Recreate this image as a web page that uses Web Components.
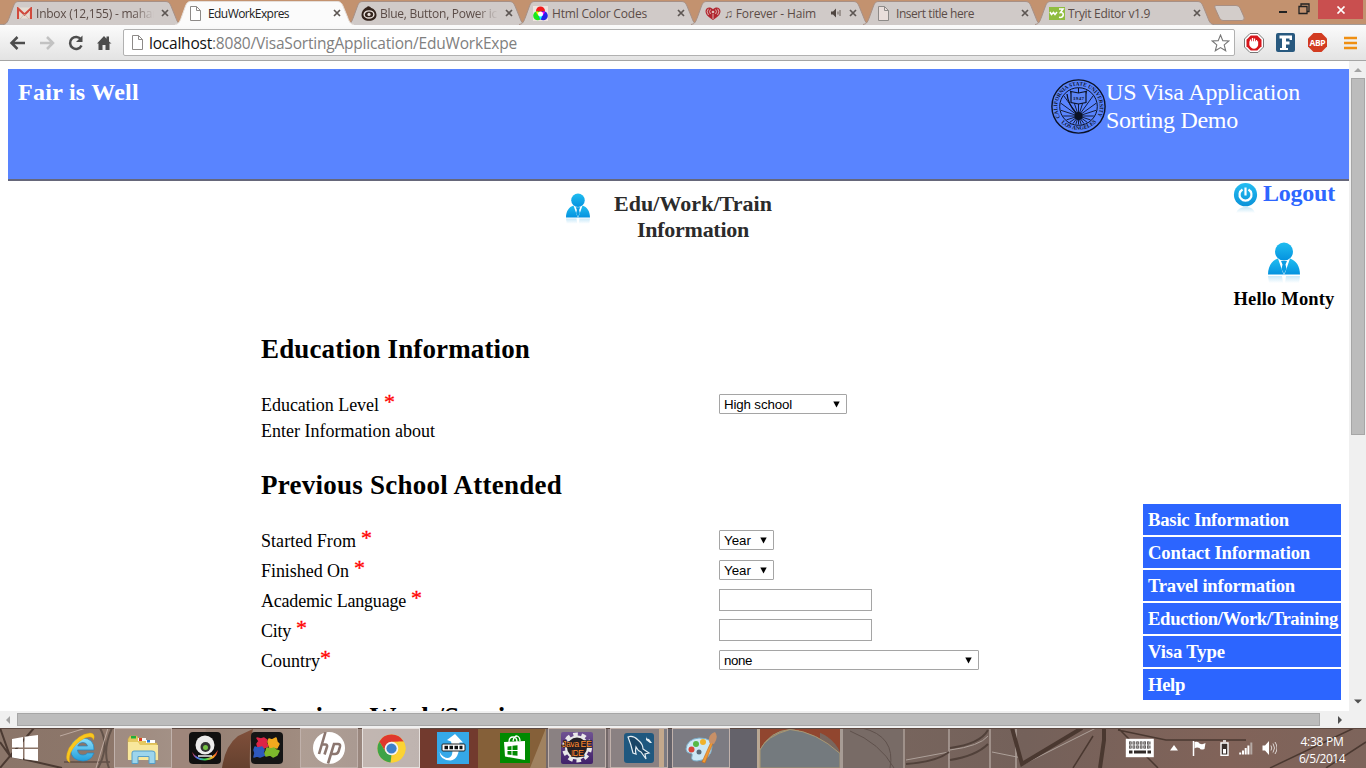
<!DOCTYPE html>
<html lang="en">
<head>
<meta charset="utf-8">
<title>EduWorkExpres</title>
<style>
html,body{margin:0;height:100%;overflow:hidden}
body{font-family:"Liberation Serif","Times New Roman",serif}
</style>
</head>
<body>
<desktop-screen></desktop-screen>
<script>
const define = (name, css, html) => customElements.define(name, class extends HTMLElement {
  constructor() {
    super();
    const t = document.createElement('template');
    t.innerHTML = `<style>*{box-sizing:border-box}${css}</style>${typeof html === 'function' ? html(this) : html}`;
    this.attachShadow({mode: 'open'}).append(t.content.cloneNode(true));
  }
});

const pageIcon = `<svg width="13" height="15" viewBox="0 0 13 15"><path d="M1.5.5h6l4 4v10h-10z" fill="var(--paper,#fff)" stroke="#8d8a88"/><path d="M7.5.5v4h4" fill="none" stroke="#8d8a88"/></svg>`;
const favicons = {
  mail: `<svg width="15" height="12" viewBox="0 0 15 12"><rect x=".5" y=".5" width="14" height="11" fill="#e6ddd3"/><path d="M1 12V1.5l6.500 6 6.500-6V12" fill="none" stroke="#d14a3d" stroke-width="2.200"/><path d="M3 12l4.500-5 4.500 5" fill="none" stroke="#c9b5a7" stroke-width=".8"/></svg>`,
  page: pageIcon,
  eye: `<svg width="16" height="15" viewBox="0 0 17 16"><path d="M4.500 2Q8 .5 7 0q3 .5 4 2c3.500 1 5.500 4.500 5.500 7.500 0 4-3.500 6.300-8 6.300S.5 13.500.5 9.500C.5 6 2.500 3.500 4.500 2z" fill="#33231c"/><ellipse cx="8.500" cy="9" rx="5.200" ry="3.800" fill="none" stroke="#e8dfda" stroke-width="1.500"/><circle cx="8.500" cy="9" r="1.700" fill="#e8dfda"/></svg>`,
  rgb: `<svg width="15" height="15" viewBox="0 0 15 15"><rect width="15" height="15" fill="#eee3df"/><circle cx="7.500" cy="5" r="4.500" fill="#f21b1b"/><circle cx="4.700" cy="9.700" r="4.500" fill="#19e81d"/><circle cx="10.300" cy="9.700" r="4.500" fill="#2424e8"/><path d="M3.200 5.500a4.500 4.500 0 0 1 4.300 3.700L7.500 9.500A4.500 4.500 0 0 1 3.200 5.500z" fill="#ff0"/><path d="M11.800 5.500a4.500 4.500 0 0 0-4.300 4 4.500 4.500 0 0 0 4.300-4z" fill="#f0f"/><path d="M7.500 7a4.500 4.500 0 0 1 0 6.500A4.500 4.500 0 0 1 7.500 7z" fill="#0ff"/><circle cx="7.500" cy="8" r="2.500" fill="#fff"/></svg>`,
  heart: `<svg width="16" height="13" viewBox="0 0 16 13"><path d="M8 13C4 10.500.5 7.700.5 4.200.5 0 5.500-.8 8 2.200 10.500-.8 15.500 0 15.500 4.200 15.500 7.700 12 10.500 8 13z" fill="#b22630"/><path d="M5.500 2.500q-2 2 0 4.500M3.300 1.800q-2.500 3 .2 6.200M10.500 2.500q2 2 0 4.500M12.700 1.800q2.500 3-.2 6.200M8 7v5" fill="none" stroke="#e0bfba" stroke-width=".9"/><circle cx="8" cy="5" r="1.300" fill="#e0bfba"/></svg>`,
  w3: `<svg width="16" height="13" viewBox="0 0 16 13"><rect width="16" height="13" fill="#8fbd3f"/><path d="M1 5l1.500 2.500L4.500 5.500 6 7.500l2-2.500" fill="none" stroke="#fff" stroke-width="1.500"/><path d="M10 2h4l-2.500 3.500q3-.3 2.700 2.500-.5 3-4.200 2.300" fill="none" stroke="#fff" stroke-width="1.600"/></svg>`
};

define('browser-tab', `
:host{display:block;position:relative;flex:none;width:172px;height:25px;color:#5b4c47;font:12px/17px "Open Sans","Noto Sans",sans-serif;--paper:#e9dedb}
:host([active]){color:#222;z-index:2;--paper:#fff}
.shape{position:absolute;left:0;top:0}
.row{position:relative;display:grid;grid-template-columns:19px 1fr auto 16px;align-items:center;height:25px;padding:1px 2px 0 13px;margin-left:1px}
.t{white-space:nowrap;overflow:hidden}
:host([fade]) .t{-webkit-mask:linear-gradient(90deg,#000 82%,transparent 100%);max-width:118px}
.ic{display:flex;align-items:center;height:17px}
.x{display:flex;justify-content:center}`,
el => { const a = el.hasAttribute('active'); return `
<svg class="shape" width="184" height="26"><path d="M0 25C4 24 5 21 6.500 17L10.500 6C12 2.500 13 1.500 16 1.500H162C165 1.500 166.500 2.500 168 6L172.500 17C174 21 175 24 179 25z" fill="${a ? '#fbfbfb' : '#d0cac8'}"/><path d="M0 24.500C4 24 5 21 6.500 17L10.500 6C12 2.500 13 1.500 16 1.500H162C165 1.500 166.500 2.500 168 6L172.500 17C174 21 175 24 179 24.500" fill="none" stroke="${a ? '#e5ded9' : '#a79086'}"/></svg>
<div class="row"><span class="ic">${favicons[el.getAttribute('icon')]}</span><span class="t"><slot></slot></span><span class="ic">${el.hasAttribute('audio') ? '<svg width="14" height="10"><path d="M0 3.500h2L5 .5v9L2 6.500H0z" fill="#4f4540"/><path d="M7 3.500v3M9 2v6" stroke="#6b605b"/></svg>' : ''}</span><span class="x"><svg width="8" height="8"><path d="M1 1l6 6M7 1L1 7" stroke="#5d5653" stroke-width="1.700"/></svg></span></div>`; });

define('tab-strip', `
:host{display:flex;height:25px;background:#c3926f;padding-left:3px;position:relative;border-bottom:1px solid #a59a95}
.new{margin:4px 0 0 6px}
.win{margin-left:auto;display:flex;height:19px;align-items:center;padding-right:3px}
.win svg{display:block}
.close{width:45px;height:19px;background:#c94f4f;display:grid;place-items:center;margin-left:8px}`, `
<browser-tab icon="mail" fade><fit-text w="121">Inbox (12,155) - mahar</fit-text></browser-tab>
<browser-tab icon="page" active><fit-text w="81">EduWorkExpres</fit-text></browser-tab>
<browser-tab icon="eye" fade><fit-text w="117">Blue, Button, Power ic</fit-text></browser-tab>
<browser-tab icon="rgb"><fit-text w="95">Html Color Codes</fit-text></browser-tab>
<browser-tab icon="heart" audio><fit-text w="92">♫ Forever - Haim</fit-text></browser-tab>
<browser-tab icon="page"><fit-text w="78">Insert title here</fit-text></browser-tab>
<browser-tab icon="w3"><fit-text w="82">Tryit Editor v1.9</fit-text></browser-tab>
<svg class="new" width="34" height="18"><path d="M3 1.500H23Q26 1.500 27 4L31 13Q32 16.500 29 16.500H10Q7.500 16.500 6.500 14L2 4Q1 1.500 3 1.500z" fill="#d3cdca" stroke="#a88f83"/></svg>
<div class="win"><svg width="10" height="19"><path d="M0 12h8" stroke="#222" stroke-width="2"/></svg>
<svg width="12" height="19" style="margin-left:9px"><path d="M1 6.500h8v7H1zM3 6V4h8v7.500H9.500" fill="none" stroke="#222" stroke-width="1.300"/></svg>
<div class="close"><svg width="10" height="8"><path d="M1.500.5l7 7M8.500.5l-7 7" stroke="#fff" stroke-width="1.700"/></svg></div></div>`);

define('tool-bar', `
:host{display:flex;height:36px;align-items:center;background:linear-gradient(#fbfbfb,#e3e3e3);border-bottom:1px solid #a5a5a5;padding:0 8px 0 9px}
svg{display:block;flex:none}
.omni{display:flex;align-items:center;width:1112px;height:27px;background:#fff;border:1px solid #b1b1b1;border-radius:2px;padding:0 4px 0 7px;font:15.500px/24px "Open Sans","Noto Sans",sans-serif;color:#808080;margin-right:9px;--paper:#fff}
.omni b{font-weight:400;color:#111}.star{margin-left:auto}.u{margin-left:5px;white-space:nowrap}`, `
<svg width="18" height="16"><path d="M8.500 2L2.500 8l6 6M3 8h13" fill="none" stroke="#4d4d4d" stroke-width="2.500"/></svg>
<svg width="18" height="16" style="margin-left:11px"><path d="M9 2l6 6-6 6M15 8H2" fill="none" stroke="#c2c2c2" stroke-width="2.500"/></svg>
<svg width="18" height="16" style="margin-left:11px"><path d="M14 4.500A6 6 0 1 0 14.500 10.500" fill="none" stroke="#4d4d4d" stroke-width="2.500"/><path d="M15.500 .5v6.500H9z" fill="#4d4d4d"/></svg>
<svg width="16" height="16" style="margin-left:11px"><path d="M1 8.500L8 1l2.500 2.700V1.500h2.500v5L15.500 8.500H13.500V15h-4v-5h-3v5h-4V8.500z" fill="#4d4d4d"/></svg>
<div class="omni" style="margin-left:11px">${pageIcon}<span class="u"><fit-text w="63"><b>localhost</b></fit-text><fit-text w="305">:8080/VisaSortingApplication/EduWorkExpe</fit-text></span>
<svg class="star" width="19" height="18"><path d="M9.500 1l2.300 5.600 6 .4-4.600 3.900 1.500 5.900-5.200-3.200-5.200 3.200 1.500-5.900L1.200 7l6-.4z" fill="#fff" stroke="#777" stroke-width="1.100"/></svg></div>
<svg width="20" height="20"><path d="M6 .5h8L19.500 6v8L14 19.500H6L.5 14V6z" fill="#fff" stroke="#777"/><path d="M6.700 2.500h6.600l4.200 4.200v6.600l-4.200 4.200H6.700l-4.200-4.200V6.700z" fill="#d7151b"/><path d="M6.500 10V6.500m2 3.500V5m2 5V5.500m2 4.500V7M6 9h7.500v3q-1 3-3.500 3T6 12z" stroke="#fff" stroke-width="1.300" fill="#fff"/></svg>
<svg width="19" height="19" style="margin-left:12px"><rect width="19" height="19" rx="2" fill="#28597f"/><path d="M3.500 2.500h12.500v4.500h-2.500v-1.500h-3.500v3h3.500v3h-3.500v3.500h2v2H4v-2h2v-9.500h-2.500z" fill="#fff"/></svg>
<svg width="19" height="19" style="margin-left:13px"><path d="M5.500 0h8L19 5.500v8L13.500 19h-8L0 13.500v-8z" fill="#d23b20"/><text x="1.500" y="12.500" textLength="16" font-family="Open Sans,sans-serif" font-size="8.500" font-weight="700" fill="#fff">ABP</text></svg>
<svg width="14" height="14" style="margin-left:17px"><path d="M0 2h13M0 7h13M0 12h13" stroke="#ef8f12" stroke-width="2.600"/></svg>`);

define('user-glyph', `:host{display:block;flex:none}svg{display:block}`, el => { const w = +el.getAttribute('size'), i = 'g' + w; return `
<svg width="${w}" height="${w * 1.32}" viewBox="0 0 32 42"><defs><linearGradient id="${i}" x2="0" y2="1"><stop stop-color="#20bdf0"/><stop offset="1" stop-color="#0492df"/></linearGradient><linearGradient id="r${i}" x2="0" y2="1"><stop stop-color="#c9e9f9"/><stop offset="1" stop-color="#fff"/></linearGradient></defs>
<circle cx="16" cy="9.500" r="9" fill="url(#${i})"/><path d="M0 32.500C0 24 4 18.500 10 16.500L15 31l1 1.500 1-1.500 5-14.500C28 18.500 32 24 32 32.500z" fill="url(#${i})"/><path d="M13 19h6l-1.500 3.500 1 4.500-2.500 5-2.500-5 1-4.500z" fill="#0b9ce3"/><path d="M0 34h14l1 7H1zM18 34h14l-1 7H17z" fill="url(#r${i})"/></svg>`; });

define('power-glyph', `:host{display:block;flex:none}svg{display:block}`, `
<svg width="25" height="31"><defs><linearGradient id="p" x2="0" y2="1"><stop stop-color="#25bdf2"/><stop offset="1" stop-color="#0a92d8"/></linearGradient><linearGradient id="q" x2="0" y2="1"><stop stop-color="#c4e7f7"/><stop offset="1" stop-color="#fff"/></linearGradient></defs><circle cx="12.500" cy="11.700" r="11.600" fill="url(#p)"/><path d="M9.500 6.500a6 6 0 1 0 6 0" fill="none" stroke="#fff" stroke-width="2.200"/><path d="M12.500 4.500v8" stroke="#fff" stroke-width="2.200"/><path d="M3 30Q5 24.500 12.500 24t9.500 6z" fill="url(#q)"/></svg>`);

define('university-seal', `:host{display:block;flex:none}svg{display:block}`, () => {
  let rays = '';
  for (let k = 0; k < 20; k++) {
    const a = k * Math.PI / 10, c = Math.cos(a), s = Math.sin(a), d = 9.5;
    const r = -d * s + Math.sqrt(18 * 18 - d * d * c * c);
    rays += `M27.500 37L${(27.5 + r * c).toFixed(1)} ${(37 + r * s).toFixed(1)}`;
  }
  return `<svg width="55" height="55" viewBox="0 0 55 55"><g fill="none" stroke="#0b1226"><circle cx="27.500" cy="27.500" r="26.600" stroke-width="1.400"/><circle cx="27.500" cy="27.500" r="18.800" stroke-width="1"/><path d="${rays}" stroke-width=".9"/></g><circle cx="27.500" cy="37" r="4" fill="#0b1226"/>
<path d="M20 12.500l7.500 1.500 7.500-1.500v11l-7.500 1.500-7.500-1.500z" fill="#5c84f5" stroke="#0b1226" stroke-width="1.200"/><path d="M27.500 9v4" stroke="#0b1226"/><path d="M16 15q1 10 9 19" stroke="#0b1226" stroke-width="1.300" fill="none"/>
<path id="a" d="M9.200 38.500A21.200 21.200 0 1 1 45.800 38.500" fill="none"/><path id="b" d="M9.500 43A24.800 24.800 0 0 0 45.500 43" fill="none"/>
<g font-family="Liberation Serif,serif" font-size="5.600" font-weight="700" fill="#0b1226"><text textLength="87" lengthAdjust="spacingAndGlyphs"><textPath href="#a">CALIFORNIA STATE UNIVERSITY</textPath></text><text><textPath href="#b" startOffset="1">LOS ANGELES</textPath></text><text x="22" y="20.500" font-size="5" textLength="11">1947</text></g></svg>`; });

define('page-header', `
:host{display:flex;height:112px;margin:8px 0 0 8px;background:#5984ff;border-bottom:2px solid #66677a;color:#fff;padding:9px 49px 0 10px}
.brand{font:bold 24px/28px "Liberation Serif",serif}
.app{margin-left:auto;display:flex;font:24px/28px "Liberation Serif",serif}
.app fit-text{display:table}university-seal{margin-top:1px}`, `
<div class="brand"><fit-text w="121">Fair is Well</fit-text></div>
<div class="app"><university-seal></university-seal><div><fit-text w="194">US Visa Application</fit-text><fit-text w="132">Sorting Demo</fit-text></div></div>`);

define('menu-link', `:host{display:flex;align-items:center;height:31px;background:#2c65ff;color:#fff;font:bold 18.700px/31px "Liberation Serif",serif;padding-left:5px}`, `<slot></slot>`);

define('side-panel', `
:host{display:flex;flex-direction:column;height:100%;color:#000}
.logout{display:flex;align-items:flex-start;justify-content:flex-end;margin-right:14px;color:#2d66ff;font:bold 24px/26px "Liberation Serif",serif;padding-top:2px;gap:5px}
.logout fit-text{margin-top:-3px}
.hello{align-self:flex-end;width:102px;margin:28px 14px 0 0;display:flex;flex-direction:column;align-items:center;font:bold 18.500px/20px "Liberation Serif",serif;gap:5px}
nav{margin:auto 8px 11px 0;display:grid;gap:2px}`, `
<div class="logout"><power-glyph></power-glyph><fit-text w="72">Logout</fit-text></div>
<div class="hello"><user-glyph size="32"></user-glyph><fit-text w="101">Hello Monty</fit-text></div>
<nav><menu-link><fit-text w="141">Basic Information</fit-text></menu-link><menu-link><fit-text w="162">Contact Information</fit-text></menu-link><menu-link><fit-text w="147">Travel information</fit-text></menu-link><menu-link><fit-text w="190">Eduction/Work/Training</fit-text></menu-link><menu-link><fit-text w="77">Visa Type</fit-text></menu-link><menu-link><fit-text w="37">Help</fit-text></menu-link></nav>`);

define('form-row', `
:host{display:grid;grid-template-columns:458px auto;align-items:center;justify-content:start;height:30px;font:18px/26px "Liberation Serif",serif;color:#000}
:host([plain]){height:26px}
.l{display:flex;align-items:baseline;height:26px;margin-top:2px}
:host([plain]) .l{margin-top:-3px}
i{font-style:normal;color:#f00;font-size:22px;line-height:20px;margin-left:5px;transform:translateY(-2px);-webkit-text-stroke:.3px #f00}
:host([tight]) i{margin-left:0}`, el => `
<div class="l"><fit-text w="${el.getAttribute('w')}">${el.getAttribute('label')}</fit-text>${el.hasAttribute('plain') ? '' : '<i>*</i>'}</div><slot></slot>`);

define('drop-down', `
:host{display:flex;align-items:center;justify-content:space-between;height:20px;border:1px solid #a5a5a5;border-radius:1px;background:#fff;font:13.300px/18px "Liberation Sans",Arial,sans-serif;padding:2px 6px 0 4px;color:#000;box-sizing:border-box}
svg{display:block;margin-top:-2px}`, `<slot></slot><svg width="7" height="7"><path d="M.3 .5h6.400L3.500 6.500z"/></svg>`);
define('text-field', `:host{display:block;width:153px;height:22px;border:1px solid #a5a5a5;background:#fff;box-sizing:border-box}`, ``);
define('section-title', `:host{display:block;height:30px;font:bold 27px/30px "Liberation Serif",serif;color:#000;white-space:nowrap}`, `<slot></slot>`);

define('form-page', `
:host{display:grid;grid-template-columns:882px 1fr;height:530px;padding-left:261px;overflow:hidden}
.c{height:530px;overflow:hidden}
.head{display:flex;padding:12px 0 0 305px;gap:24px;height:153px;font:bold 22px/26px "Liberation Serif",serif;color:#2b2b2b}
.head div{display:flex;flex-direction:column;align-items:center;margin-top:-2px;width:158px}
.g1{height:25px}.g2{height:25px}.g3{height:27px}`, `
<div class="c">
<div class="head"><user-glyph size="24"></user-glyph><div><fit-text w="158">Edu/Work/Train</fit-text><fit-text w="112">Information</fit-text></div></div>
<section-title><fit-text w="269">Education Information</fit-text></section-title><div class="g1"></div>
<form-row label="Education Level" w="118"><drop-down style="width:128px"><fit-text w="68">High school</fit-text></drop-down></form-row>
<form-row label="Enter Information about" w="174" plain></form-row><div class="g2"></div>
<section-title><fit-text w="301">Previous School Attended</fit-text></section-title><div class="g1"></div>
<form-row label="Started From" w="95"><drop-down style="width:55px"><fit-text w="27">Year</fit-text></drop-down></form-row>
<form-row label="Finished On" w="88"><drop-down style="width:55px"><fit-text w="27">Year</fit-text></drop-down></form-row>
<form-row label="Academic Language" w="145"><text-field></text-field></form-row>
<form-row label="City" w="30"><text-field></text-field></form-row>
<form-row label="Country" w="59" tight><drop-down style="width:260px"><fit-text w="28">none</fit-text></drop-down></form-row><div class="g3"></div>
<section-title><fit-text w="269">Previous Work/Service</fit-text></section-title>
</div>
<side-panel></side-panel>`);

define('v-scroll', `:host{display:flex;flex-direction:column;align-items:center;justify-content:space-between;background:#f0f0f0;padding:7px 0 7px}
.b{width:14px;height:357px;background:#bcbcbc;border:1px solid #a6a6a6;margin:5px 0 auto}svg{display:block}`, `
<svg width="8" height="5"><path d="M4 0l4 4H0z" fill="#a3a3a3"/></svg><div class="b"></div><svg width="8" height="5"><path d="M4 4.500L8 .5H0z" fill="#505050"/></svg>`);
define('h-scroll', `:host{display:flex;align-items:center;background:#f0f0f0;height:17px;padding:0 24px 0 6px}
.b{width:1303px;height:13px;background:#bcbcbc;border:1px solid #a6a6a6;margin:0 auto 0 6px}svg{display:block}`, `
<svg width="5" height="8"><path d="M0 4l4-4v8z" fill="#a3a3a3"/></svg><div class="b"></div><svg width="5" height="8"><path d="M5 4L1 0v8z" fill="#505050"/></svg>`);

const apps = {
  ie: `<svg width="32" height="32" viewBox="0 0 32 32"><defs><linearGradient id="e" x2="0" y2="1"><stop stop-color="#8ee0fb"/><stop offset="1" stop-color="#229fdc"/></linearGradient></defs><path d="M29 18H12.500q.5 5 5.500 5 3 0 4.500-2h6.500Q26 29 18 29 6 28.500 5.500 17.500 6 6.500 17.500 6 29.500 6.500 29 18zM12.700 14h9.800q-.7-3.500-4.700-3.500T12.700 14z" fill="url(#e)" stroke="#2385c0" stroke-width=".7"/><path d="M5 30.500Q-1.500 28 4 16 13 2 25 1q6 .5 3.500 7Q27.500 3 20 6 10 11 5.500 21q-2 6-.5 9.500z" fill="#fac71d" stroke="#d9a015" stroke-width=".4"/></svg>`,
  files: `<svg width="34" height="32" viewBox="0 0 34 32"><path d="M2 27V7l2-3h7l1 2h5l1 3h5l1 2h7l1 17z" fill="#e5c85f" stroke="#c9a94a" stroke-width=".6"/><path d="M2 28V10h10l2 3h18v15z" fill="#f8e79c"/><path d="M5 4h5v2.500H5z" fill="#1fae3a"/><path d="M12 6h8v3h-8z" fill="#f8f8f8"/><path d="M13 6h3v3h-3z" fill="#dc3d20"/><path d="M20 8h9v3h-9z" fill="#fff"/><path d="M21 8h3v2.500h-3z" fill="#2779d0"/><path d="M6 31.500V21q0-2 2-2h18q3 0 3 2v10.500h-6v-7H12v7z" fill="#9dd5ec" stroke="#559ec8"/></svg>`,
  cam: `<svg width="32" height="32" viewBox="0 0 32 32"><defs><linearGradient id="c"><stop stop-color="#d33"/><stop offset=".2" stop-color="#57f"/><stop offset=".5" stop-color="#3d5"/><stop offset=".8" stop-color="#fa2"/><stop offset="1" stop-color="#e33"/></linearGradient></defs><rect width="32" height="32" rx="4" fill="#101010"/><path d="M3 20q5 7 13 6.500T29 18q-2 10.500-13 10.500T3 20z" fill="url(#c)"/><circle cx="16" cy="13" r="9.500" fill="#ececec"/><circle cx="16.500" cy="15" r="5" fill="#333"/><circle cx="16.500" cy="15.500" r="2.500" fill="#75c344"/><path d="M9 24h14" stroke="#ececec" stroke-width="1.500"/></svg>`,
  puzzle: `<svg width="32" height="32" viewBox="0 0 32 32"><rect width="32" height="32" rx="4" fill="#151515"/><g stroke-linejoin="round" stroke-width="1.500"><path d="M6 6l4 1 3-1 3 2-1 3 2 3-4 2-2-2-4 1-1-3 2-3z" fill="#df2446" stroke="#df2446"/><path d="M18 7l3 1 4-2 1 4 2 2-2 4-4-1-3 1-1-3-1-3z" fill="#f2a91e" stroke="#f2a91e"/><path d="M4 15l3 1 4-1 2 3-1 3 2 2-5 2-3-1-3 1 1-4-1-3z" fill="#2e59bd" stroke="#2e59bd"/><path d="M16 16l4 1 3-1 2 2 3 1-2 4-4 2-3-2-4 1-1-3 1-2z" fill="#7eb82c" stroke="#7eb82c"/></g></svg>`,
  hp: `<svg width="32" height="32" viewBox="0 0 32 32"><circle cx="16" cy="16" r="16" fill="#fff"/><path d="M12.500 0L6 22M9 12.500h3.500q2 0 1.500 2.500l-2.500 7.500" fill="none" stroke="#8c7770" stroke-width="2.600"/><path d="M15 31.500L21 12h4q2.500 0 2 2.500l-1.500 5q-1 2.500-3.500 2.500h-3" fill="none" stroke="#8c7770" stroke-width="2.600"/></svg>`,
  chrome: `<svg width="29" height="29" viewBox="0 0 30 30"><circle cx="15" cy="15" r="14.500" fill="#f8cf35"/><path d="M15 15L9 18.500 2.400 7.800A14.500 14.500 0 0 1 27.600 7.800L15 8z" fill="#e0382d"/><path d="M2.400 7.800L9 18.500 15 21.500 14 29.500A14.500 14.500 0 0 1 2.400 7.800z" fill="#3ea348"/><path d="M14 29.500l7.500-11 .5-10.500h5.600A14.500 14.500 0 0 1 14 29.500z" fill="#fbd334"/><circle cx="15" cy="15" r="7" fill="#f4f4f4"/><circle cx="15" cy="15" r="5.300" fill="#3d80ca"/></svg>`,
  share: `<svg width="32" height="32" viewBox="0 0 32 32"><rect width="32" height="32" fill="#35a8e8"/><path d="M2.500 20q1 8.500 11 8.500 9-1 9-18h3.500L18 2l-8 6 4 1.500Q18 25 11 26q-5 0-8.500-6z" fill="#fff"/><rect x="5" y="12" width="23" height="7" rx="1" fill="#fff" stroke="#222"/><path d="M7.500 15.500h18" stroke="#111" stroke-width="3.500" stroke-dasharray="3.500 1.500"/></svg>`,
  store: `<svg width="30" height="30" viewBox="0 0 30 30"><rect width="30" height="30" fill="#008a00"/><path d="M4 9l21-1v19L5 23.500z" fill="#fff"/><path d="M9 9q0-5 4-5t4 5M13 8q1-5 4-5 3 1 3 5" fill="none" stroke="#fff" stroke-width="1.300"/><path d="M7.500 13.500l4-.5v4h-4zM12.500 12.800l5-.6V17h-5zM7.500 18h4v4l-4-.5zM12.500 18h5v4.800l-5-.6z" fill="#008a00"/></svg>`,
  java: `<svg width="32" height="32" viewBox="0 0 32 32"><defs><linearGradient id="j" x2="0" y2="1"><stop stop-color="#6f5292"/><stop offset="1" stop-color="#41216a"/></linearGradient></defs><rect width="32" height="32" rx="2" fill="url(#j)"/><circle cx="16" cy="15.500" r="13" fill="none" stroke="#e9e9e9" stroke-width="4" stroke-dasharray="4.500 3.668"/><circle cx="16" cy="15.500" r="11" fill="#242026" stroke="#e9e9e9" stroke-width="2"/><g font-family="Liberation Sans,sans-serif" fill="#ff8c2e" stroke="#251b20" stroke-width="1.500" paint-order="stroke" font-size="9"><text x="1" y="14.500" textLength="30">Java EE</text><text x="10" y="23.500" textLength="13">IDE</text></g></svg>`,
  sql: `<svg width="32" height="32" viewBox="0 0 32 32"><rect x="1" y="1" width="30" height="30" rx="3" fill="#1f587f"/><path d="M5 5q5-2 10 3 5 4 5 9l6 4-4 1 1 5-5-7q-3-1-5-5-1 4 0 7l-3-1Q8 12 5 5z" fill="#194566" stroke="#e6eff4" stroke-width="1.200"/><path d="M23 4q0 3 3 3l3 4-2 0-4-3z" fill="#e6eff4"/></svg>`,
  paint: `<svg width="32" height="32" viewBox="0 0 32 32"><path d="M1 17Q2 7 14 6q14 0 13 9-1 13-15 14-7 0-5-5 1-3-3-3-3-1-3-4z" fill="#cde8f5" stroke="#7badc8"/><circle cx="6.500" cy="17.500" r="3" fill="#d94539"/><circle cx="11" cy="12" r="3" fill="#57b947"/><circle cx="18" cy="10" r="3" fill="#f0b22b"/><circle cx="14" cy="20" r="2.500" fill="#5a6c7a"/><path d="M17 30L26 10l2 1-8 20z" fill="#f19a34" stroke="#bd6b1f" stroke-width=".6"/><path d="M24.500 11Q22 3 30 0q4 5-1 12z" fill="#c89067"/></svg>`
};
define('task-button', `
:host{display:grid;place-items:center;width:58px;height:40px;flex:none;border:1px solid transparent;box-sizing:border-box}
:host([open]){border-color:#c0b1ab;background:rgba(255,255,255,.16)}
:host([open][current]){border-color:#e5dfdc;background:rgba(255,255,255,.4)}
svg{display:block}`, el => apps[el.getAttribute('app')]);

define('task-bar', `
:host{display:flex;height:40px;align-items:center;position:relative;overflow:hidden;gap:4px;color:#fff;font:12px/17px "Open Sans","Noto Sans",sans-serif}
.bg{position:absolute;inset:0}
.start{width:26px;margin-left:12px;margin-right:10px;flex:none;position:relative}
task-button{position:relative}
.tray{margin-left:auto;display:flex;align-items:center;position:relative;padding-right:21px}
.clock{display:flex;flex-direction:column;align-items:center;width:46px;margin-left:22px;padding-top:3px}svg{display:block}`, `
<svg class="bg" width="1366" height="40"><defs><linearGradient id="w"><stop stop-color="#8a7569"/><stop offset=".1" stop-color="#8e776a"/><stop offset=".22" stop-color="#a08c80"/><stop offset=".3" stop-color="#94827c"/><stop offset=".6" stop-color="#79675f"/><stop offset=".75" stop-color="#74615a"/><stop offset=".9" stop-color="#816359"/><stop offset="1" stop-color="#7d645b"/></linearGradient><linearGradient id="o" x2="0" y2="1"><stop stop-color="#81503b"/><stop offset="1" stop-color="#65412f"/></linearGradient></defs>
<rect width="1366" height="40" fill="url(#w)"/>
<g fill="none" stroke="#4b3a32" stroke-width="2"><path d="M0 0l10 28L34 0M0 40l10-12 52 12M10 28L0 14"/><path d="M64 34h46" stroke-width="1"/><path d="M100 0q10 18-2 40M112 0q-10 22-3 40" stroke="#625249"/></g><path d="M60 8l26-8M96 40l12-40" stroke="#bdaaa0" fill="none"/>
<path d="M222 40Q225 18 238 8l15-7q-4 14-3 39z" fill="url(#o)"/><path d="M172 0h34l-5 40h-29z" fill="#9e867b"/>
<rect x="420" width="58" height="40" fill="#723a2e"/><rect x="478" width="67" height="40" fill="#856039"/><path d="M530 40L546 0h6v40z" fill="#a08260"/><rect x="546" width="114" height="40" fill="#74696a"/><rect x="608" width="3" height="40" fill="#948688"/><rect x="659" width="5" height="40" fill="#b89877"/><rect x="664" width="86" height="40" fill="#64626a"/>
<rect x="750" width="70" height="40" fill="#91462f"/><path d="M760 40V22Q770 3 790 1.500q18 0 27 22.500v16z" fill="#747a7e" stroke="#a99772"/><path d="M758.500 0v40M841 0" stroke="#b9a894" stroke-width="3"/><rect x="750" width="7" height="40" fill="#64626a"/><path d="M760 40V22Q766 8 790 1.500q26 2 50 24V40z" fill="#747a7e" stroke="#a99772"/><path d="M818 0h22v24Q832 6 808 1z" fill="#91462f"/><path d="M841.500 0v40" stroke="#a79c95" stroke-width="3"/><path d="M843 0h60v40h-60z" fill="#786b66"/><path d="M850 3q30 12 44 37M862 0q34 8 28 40" stroke="#5f514c" fill="none"/>
<g stroke="#ada099" fill="none"><path d="M904 0v40M949 0v40M990 0v40M1016 0v40" stroke-width="1.500"/><path d="M906 32l43-8M950 22q30-4 38-14M992 24l30 6M1024 36l72-36"/></g><path d="M906 36q30-2 43-12M950 20q30-4 38-18M950 32q26-4 38-16" fill="none" stroke="#51413a" stroke-width="2"/><g fill="none" stroke="#4a3830"><path d="M1012 0l10 36 60-36M1104 0v12l-4 28" stroke-width="4"/><path d="M1093 8l-20 32M1118 0l40 40M1118 2l48 10h80M1270 40l84-40M1366 14l-40 26" stroke-width="1.500"/></g><path d="M0 .5h1366" stroke="#5c4840"/></svg>
<svg class="start" width="26" height="26"><path d="M0 4l11-2v10.500H0zM12.500 1.800L26 0v12.500H12.500zM0 14h11v10.500L0 22.500zM12.500 14H26v12l-13.500-1.700z" fill="#fff"/></svg>
<task-button app="ie"></task-button><task-button app="files" open></task-button><task-button app="cam"></task-button><task-button app="puzzle"></task-button><task-button app="hp" open></task-button><task-button app="chrome" open current></task-button><task-button app="share"></task-button><task-button app="store"></task-button><task-button app="java" open></task-button><task-button app="sql" open></task-button><task-button app="paint" open></task-button>
<div class="tray">
<svg width="30" height="20"><rect x=".8" y=".8" width="28" height="18.400" fill="#fff"/><path d="M4 5h22M4 9h22" stroke="#302a28" stroke-width="3" stroke-dasharray="2.600 1"/><path d="M4 14h3.500M9 14h12M22.500 14H26" stroke="#302a28" stroke-width="3"/><path d="M4.500 5h22M4.500 9h22" stroke="#fff" stroke-width="1" stroke-dasharray="1.600 2"/></svg>
<svg width="8" height="6" style="margin-left:15px"><path d="M4 0l4 5.500H0z" fill="#fff"/></svg>
<svg width="14" height="16" style="margin-left:14px"><path d="M1.500 1v15" stroke="#fff" stroke-width="1.500"/><path d="M2.500 2q4-1 5 1.500 3 1.500 6-.5l-1 6q-4 1.500-5-1-3-1-5 .5z" fill="#fff"/></svg>
<svg width="9" height="16" style="margin-left:14px"><path d="M1 3h7v12.200H1zM3 1h3" fill="#39302d" stroke="#fff" stroke-width="1.400"/><path d="M3 9h3v4.500H3z" fill="#fff"/></svg>
<svg width="14" height="13" style="margin-left:10px"><path d="M1.200 12.500v-2M4 12.500V8.500M6.700 12.500V6M9.400 12.500V3.500" stroke="#fff" stroke-width="2"/><path d="M12.300 12.500V.5" stroke="#b5aaa5" stroke-width="2"/></svg>
<svg width="15" height="16" style="margin-left:9px"><path d="M.5 5.500h2.500L7 1v14l-4-4.500H.5z" fill="#fff"/><path d="M9 5.500q1.500 2.500 0 5M11 3.500q3 4.500 0 9M13 2q4 6 0 12" stroke="#ddd5d2" fill="none"/></svg>
<div class="clock"><fit-text w="43">4:38 PM</fit-text><fit-text w="46">6/5/2014</fit-text></div></div>`);

define('desktop-screen', `
:host{display:grid;grid-template-rows:25px 36px 650px 17px 40px;width:1366px;height:768px;overflow:hidden;background:#fff}
.view{display:grid;grid-template-columns:1349px 17px;height:650px;overflow:hidden}`, `
<tab-strip></tab-strip><tool-bar></tool-bar>
<div class="view"><main><page-header></page-header><form-page></form-page></main><v-scroll></v-scroll></div>
<h-scroll></h-scroll><task-bar></task-bar>`);

/* Text run whose tracking is adjusted so that it spans the width given in "w". */
customElements.define('fit-text', class extends HTMLElement {
  connectedCallback() {
    if (!this.shadowRoot) this.attachShadow({mode: 'open'}).innerHTML = '<style>:host{display:inline-block;white-space:nowrap;flex:none}</style><slot></slot>';
    const want = +this.getAttribute('w'), n = this.textContent.length;
    this.style.letterSpacing = '0px';
    const have = this.getBoundingClientRect().width;
    if (want && n) { this.style.letterSpacing = ((want - have) / n).toFixed(3) + 'px'; this.style.width = want + 'px'; }
  }
});
</script>
</body>
</html>
